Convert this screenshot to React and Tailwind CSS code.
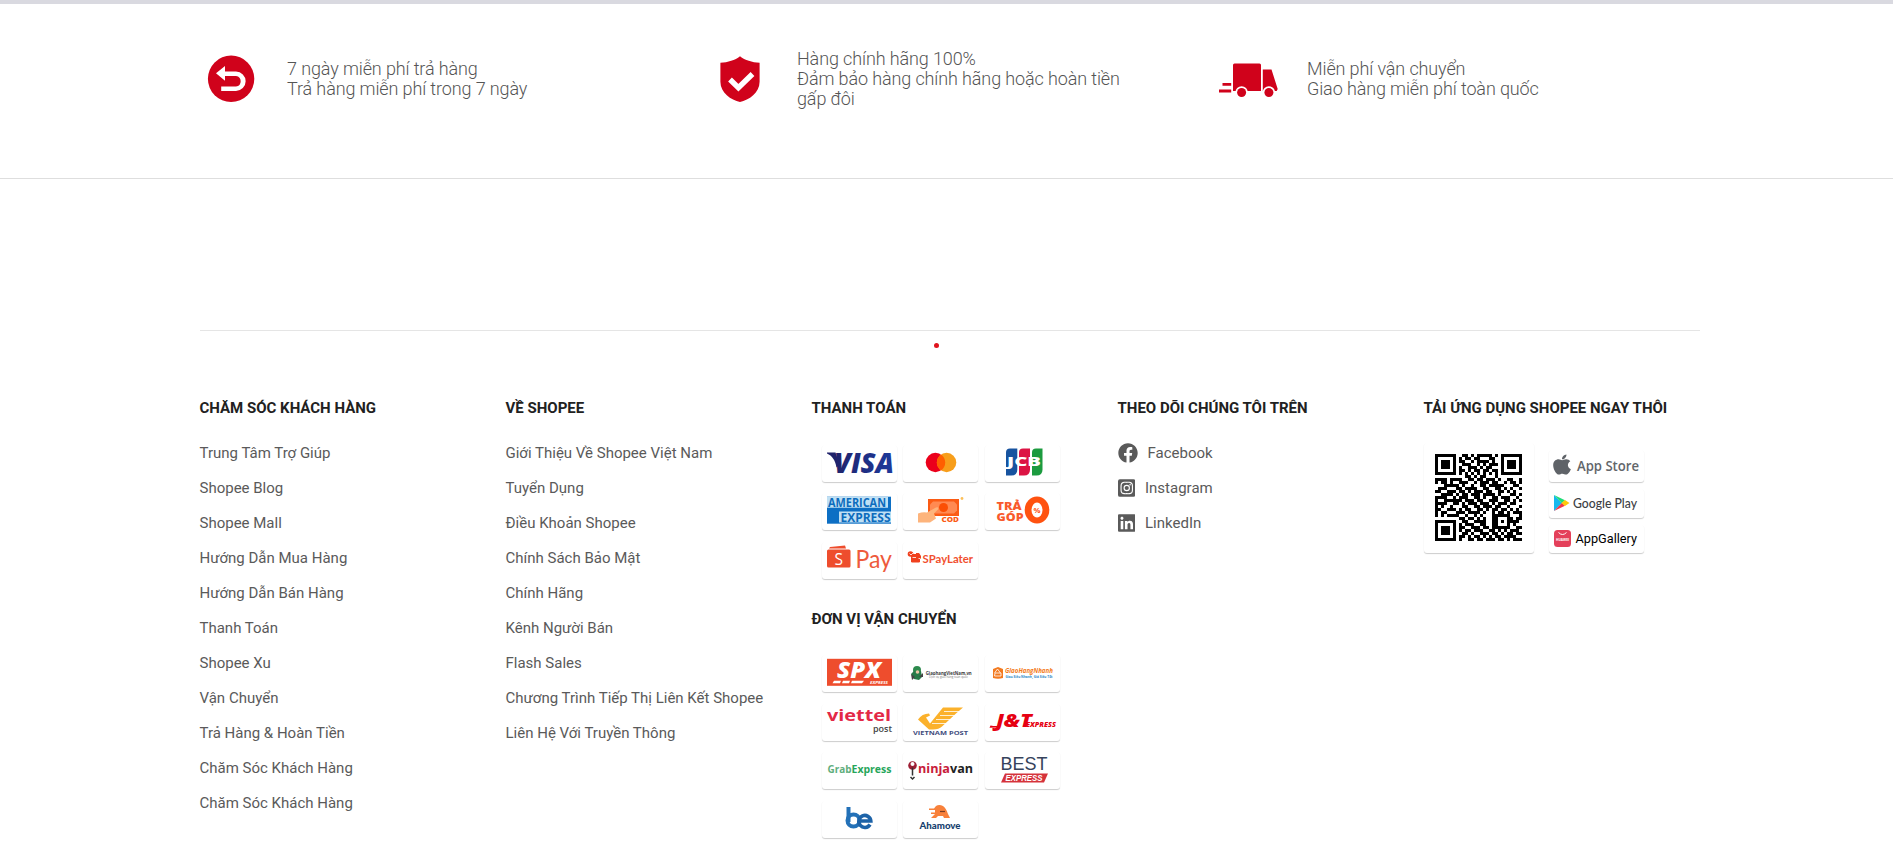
import { FaApple, FaFacebook, FaInstagramSquare, FaLinkedin } from "react-icons/fa";

const RED = "#d0021b";

const FEATURES = [
  {
    title: "7 ngày miễn phí trả hàng",
    text: "Trả hàng miễn phí trong 7 ngày",
    icon: (
      <svg className="h-14 w-[60px] shrink-0 overflow-visible" viewBox="0 0 60 56" fill="none">
        <circle cx="31.1" cy="27.8" r="23.2" fill={RED} />
        <path d="M16 22.2 25 15v5.6h11a9.6 9.6 0 0 1 0 19.3H21.2v-4.3H36a5.4 5.4 0 0 0 0-10.700H25v4.900Z" fill="#fff" />
      </svg>
    ),
  },
  {
    title: "Hàng chính hãng 100%",
    text: "Đảm bảo hàng chính hãng hoặc hoàn tiền gấp đôi",
    icon: (
      <svg className="h-14 w-[60px] shrink-0 overflow-visible" viewBox="0 0 60 56" fill="none">
        <path d="M30 5.2c5 4 12 6 19.6 6.6v19C49.6 42 39 49 30 51 21 49 10.4 42 10.4 30.8v-19C18 11.2 25 9.2 30 5.2Z" fill={RED} />
        <path d="m20 28.5 8.4 8.2L42.5 23" stroke="#fff" strokeWidth="5.4" />
      </svg>
    ),
  },
  {
    title: "Miễn phí vận chuyển",
    text: "Giao hàng miễn phí toàn quốc",
    icon: (
      <svg className="h-14 w-[60px] shrink-0 overflow-visible" viewBox="0 0 60 56" fill={RED}>
        <path d="M14.5 12.5h25q1.500 0 1.500 1.500v26H13V14q0-1.500 1.500-1.500ZM42.800 18.500h8.700l6.200 19.500-1 2H42.800Z" />
        <path d="M2.5 32h8.700v2.800H2.500ZM-1 38.500h12.200v2.900H-1Z" />
        <circle cx="21.600" cy="41.500" r="6.200" fill="#fff" />
        <circle cx="48.900" cy="41.500" r="6.200" fill="#fff" />
        <circle cx="21.600" cy="41.500" r="4.500" />
        <circle cx="48.900" cy="41.500" r="4.500" />
      </svg>
    ),
  },
];

const CARE = [
  "Trung Tâm Trợ Giúp",
  "Shopee Blog",
  "Shopee Mall",
  "Hướng Dẫn Mua Hàng",
  "Hướng Dẫn Bán Hàng",
  "Thanh Toán",
  "Shopee Xu",
  "Vận Chuyển",
  "Trả Hàng & Hoàn Tiền",
  "Chăm Sóc Khách Hàng",
  "Chăm Sóc Khách Hàng",
];

const ABOUT = [
  "Giới Thiệu Về Shopee Việt Nam",
  "Tuyển Dụng",
  "Điều Khoản Shopee",
  "Chính Sách Bảo Mật",
  "Chính Hãng",
  "Kênh Người Bán",
  "Flash Sales",
  "Chương Trình Tiếp Thị Liên Kết Shopee",
  "Liên Hệ Với Truyền Thông",
];

// One word of a logo, fitted to an exact width.
function Word({ x, y, w, size, fill, children, font = "Open Sans", weight = 700, italic = false }) {
  return (
    <text
      x={x}
      y={y}
      textLength={w}
      lengthAdjust="spacingAndGlyphs"
      fontFamily={`"${font}", sans-serif`}
      fontSize={size}
      fontWeight={weight}
      fontStyle={italic ? "italic" : "normal"}
      fill={fill}
    >
      {children}
    </text>
  );
}

const PAYMENTS = [
  <>
    <defs>
      <linearGradient id="visa"><stop stopColor="#20236b" /><stop offset="1" stopColor="#1d3a9c" /></linearGradient>
    </defs>
    <path d="M0 4.500h8.500l4 12-3 3C8.500 12.500 5 7.500 0 5.500Z" fill="#20236b" />
    <Word x={7} y={24.700} w={60} size={28.500} fill="url(#visa)" weight={800} italic>VISA</Word>
  </>,
  <>
    <circle cx="27.400" cy="14.500" r="9.700" fill="#eb001b" />
    <circle cx="38.600" cy="14.500" r="9.700" fill="#f79e1b" />
    <path d="M33 6.500a9.700 9.700 0 0 1 0 16 9.700 9.700 0 0 1 0-16Z" fill="#ff5f00" />
  </>,
  <>
    <path d="M20 .5h7.300v21q0 6-6 6H16v-23q0-4 4-4Z" fill="#17539f" />
    <path d="M33 .5h7v21q0 6-6 6h-5v-23q0-4 4-4Z" fill="#dc1444" />
    <path d="M46 .5h6.500v21q0 6-6 6H42v-23q0-4 4-4Z" fill="#1c9b3f" />
    <Word x={17} y={18.300} w={34} size={11.500} fill="#fff" weight={800}>JCB</Word>
  </>,
  <>
    <rect x="0" y=".7" width="64" height="27" fill="#0d6fc4" />
    <path d="M0 .7h61v11H0Z" fill="#bfe0f4" />
    <path d="M12 15.500h52v11H12Z" fill="#bfe0f4" />
    <Word x={1} y={10.700} w={58} size={11.500} fill="#0d6cbd" weight={700}>AMERICAN</Word>
    <Word x={13.500} y={26} w={50} size={11.500} fill="#0d6cbd" weight={700}>EXPRESS</Word>
  </>,
  <>
    <rect x="20" y="3" width="31" height="17" fill="#fb5b14" />
    <path d="M25 5.500h21l3 3v6l-3 3H25l-3-3v-6Z" fill="#ff8a52" />
    <circle cx="35.500" cy="11.500" r="4.500" fill="#fb4f05" />
    <path d="M10 17.500q5-2 9-1l9-5q3-1 2 2l-4 4 2 5-6 4H10Z" fill="#fdb47c" />
    <Word x={33.500} y={26} w={17.500} size={6.500} fill="#fb5b14" weight={800}>COD</Word>
    <circle cx="54" cy="2.500" r="1.400" fill="#fcc05a" />
  </>,
  <>
    <Word x={6.500} y={14} w={25} size={10.500} fill="#f95a2c" weight={800}>TRẢ</Word>
    <Word x={6.500} y={25} w={27} size={10.500} fill="#f95a2c" weight={800}>GÓP</Word>
    <ellipse cx="47" cy="14" rx="12.300" ry="13.500" fill="#ff5210" />
    <ellipse cx="47" cy="14" rx="5.500" ry="7.500" fill="#fff" />
    <Word x={43.500} y={16.500} w={7} size={6.500} fill="#ff5210">%</Word>
  </>,
  <>
    <path d="M3 2 18 .5l1 3H2Z" fill="#ee4d2d" />
    <rect x="0" y="4.500" width="23.500" height="18" rx="1.500" fill="#ee4d2d" />
    <Word x={7.500} y={19.500} w={8.500} size={16} fill="#fff" weight={400}>S</Word>
    <Word x={28.500} y={23} w={36.500} size={24.500} fill="#ee5a3c" font="Lato" weight={400}>Pay</Word>
  </>,
  <>
    <rect x="3" y="9" width="9" height="8.500" rx="1.200" fill="#f0401e" />
    <circle cx="2.500" cy="9" r="2.800" fill="#f0401e" />
    <path d="M8 8h3l2 3v3H8Z" fill="#f0401e" />
    <path d="M1.500 8.500 3 10l2-2M4.500 12.500H8m2.500 1h2" stroke="#fff" strokeWidth=".8" fill="none" />
    <Word x={14.500} y={17.500} w={50.500} size={11} fill="#f1502f" font="Lato" weight={700}>SPayLater</Word>
  </>,
];

const SHIPPING = [
  <>
    <rect y=".8" width="65" height="27" fill="#ee4d2d" />
    <Word x={10} y={19.500} w={44} size={22} fill="#fff" weight={800} italic>SPX</Word>
    <path d="M7 22.800h7l-1 2.500H5.500ZM16 22.800h7l-1 2.500h-7ZM25 22.800h12l-2 2.500H24Z" fill="#fff" />
    <Word x={43} y={26} w={18} size={3.600} fill="#fff" italic>EXPRESS</Word>
  </>,
  <>
    <circle cx="9" cy="12" r="4" fill="#2d8a4d" />
    <path d="M6 13h7l1 6-3 3-5-1-3-5Z" fill="#287a48" />
    <path d="m3 16 4 3-3 3Zm8 3 4-4v4Z" fill="#444" />
    <circle cx="9.500" cy="14" r="1.800" fill="#e9c6a5" />
    <Word x={17.700} y={16.500} w={46} size={5.800} fill="#3b3b3b" weight={700}>GiaohangVietNam.vn</Word>
    <Word x={21} y={20} w={39} size={3} fill="#777" weight={400}>Dịch vụ giao hàng toàn quốc</Word>
  </>,
  <>
    <path d="m3 11 5-2 5 2v9q-5 1.500-10 0Z" fill="#f37a20" />
    <path d="m4.500 15 3-4 3 4M5 15h6v3H4.500Z" stroke="#fff" strokeWidth=".8" fill="none" />
    <Word x={15} y={15.200} w={48} size={7.200} fill="#f47b20" weight={700} italic>GiaoHangNhanh</Word>
    <Word x={15.500} y={20.300} w={47} size={3.500} fill="#2a87c8">Giao Siêu Nhanh, Giá Siêu Tốt</Word>
  </>,
  <>
    <Word x={0} y={13.500} w={64} size={16.500} fill="#e32846" weight={700}>viettel</Word>
    <Word x={46} y={25} w={19} size={8} fill="#444" weight={600}>post</Word>
  </>,
  <>
    <path d="M10 12.500q4-6 11-6l1 2-4 2 4 6L35 .5h20l-7 6-14 13q-3 3-9 3h-4Z" fill="#fbb12b" />
    <path d="M36 4.500h18M32 8.500h18M28 12.500h16M24 16.500h14" stroke="#fff" strokeWidth=".8" />
    <Word x={5} y={27.500} w={55} size={5.800} fill="#3e4b7c" weight={700}>VIETNAM POST</Word>
  </>,
  <>
    <Word x={6} y={20} w={36} size={17} fill="#e60012" weight={800} italic>J&amp;T</Word>
    <path d="M.5 18.500q6 1 9 0l-2 2-8 .2Z" fill="#e60012" />
    <Word x={36} y={20} w={30} size={7.200} fill="#e60012" weight={800} italic>EXPRESS</Word>
  </>,
  <>
    <Word x={0.500} y={17.500} w={24} size={11} fill="#5fae7d" weight={700}>Grab</Word>
    <Word x={24.500} y={17.500} w={40} size={11} fill="#27a65a" weight={700}>Express</Word>
  </>,
  <>
    <circle cx="4.500" cy="10.500" r="4.300" fill="#9e1f35" />
    <circle cx="4.500" cy="9" r="2" fill="#fff" />
    <path d="M4.500 12.500v8m-2 1.500 2 2 2-2" stroke="#333" strokeWidth="1.500" fill="none" />
    <Word x={10} y={18} w={32} size={13} fill="#c8203b" weight={700}>ninja</Word>
    <Word x={42} y={18} w={23} size={13} fill="#222" weight={700}>van</Word>
  </>,
  <>
    <Word x={10.500} y={15} w={47} size={18.500} fill="#36435c" font="Liberation Sans" weight={400}>BEST</Word>
    <path d="M15 18.500h43l-4 9H11Z" fill="#d5333b" />
    <Word x={15.500} y={26.300} w={37} size={9} fill="#fff" font="Liberation Sans" italic>EXPRESS</Word>
  </>,
  <>
    <path d="M21.500 3v15" stroke="#2371b8" strokeWidth="4" />
    <circle cx="26.500" cy="16.500" r="6" fill="none" stroke="#2371b8" strokeWidth="4" />
    <path d="M43 20.500a6 6 0 1 1 .8-3.500H33.500" fill="none" stroke="#1d63a8" strokeWidth="3.600" />
  </>,
  <>
    <path d="M28 2q3-2 7 0 3 2 5 8l2 4h-6l-1-2h-5l-2 2h-5l4-4h-4V8.500h4V6h-6V4.500h5Z" fill="#f8813b" />
    <path d="M32 7.500h5" stroke="#7a3c22" strokeWidth="1.200" />
    <Word x={11.500} y={24.500} w={41} size={9.800} fill="#16416e" font="Lato" weight={900}>Ahamove</Word>
  </>,
];

const QR = [
  "11111110011010111110101111111",
  "10000010101101100011001000001",
  "10111010110010111101001011101",
  "10111010011100101011101011101",
  "10111010100111010110001011101",
  "10000010110101101101101000001",
  "11111110101010101010101111111",
  "00000000001101011000100000000",
  "11110111100110110111010011001",
  "10110100111001011101100101101",
  "00011111010010011011111000110",
  "01110001101111001100110101001",
  "11001110110101110110011010100",
  "00111101011011101111010001101",
  "11110010111001101001101110010",
  "10011111101110110011100110101",
  "11110011010111011101011101100",
  "10100100011001101110110010001",
  "11001110101100110101101101010",
  "10110001110111101001011010111",
  "10101111001001010001111110001",
  "00000000110110101001100011011",
  "11111110011001111001101011110",
  "10000010101110011001100010100",
  "10111010110011101101111110011",
  "10111010101101110011010101110",
  "10111010011010011101101011011",
  "10000010110101101010110111100",
  "11111110100110110111011010111",
];

function Heading({ children }) {
  return <h2 className="text-[15px] leading-5 font-bold whitespace-nowrap text-[#212121]">{children}</h2>;
}

function LinkColumn({ title, items }) {
  return (
    <div>
      <Heading>{title}</Heading>
      <ul className="mt-[18px]">
        {items.map((item, i) => (
          <li key={i} className="h-[35px] text-[15px] leading-[35px] whitespace-nowrap">{item}</li>
        ))}
      </ul>
    </div>
  );
}

const CARD = "rounded-[3px] bg-white shadow-[0_1px_1px_rgba(0,0,0,0.2)]";

function LogoGrid({ logos }) {
  return (
    <ul className="ml-2.5 grid w-[238px] grid-cols-[75px_75px_75px] gap-x-[6.5px] gap-y-[11.7px]">
      {logos.map((logo, i) => (
        <li key={i} className={`h-[37px] px-[5px] pt-[3.2px] ${CARD}`}>
          <svg className="block h-[27px] w-[65px] overflow-visible" viewBox="0 0 65 27">{logo}</svg>
        </li>
      ))}
    </ul>
  );
}

export default function App() {
  return (
    <div className="h-[867px] overflow-hidden bg-white font-['Roboto',sans-serif] text-[#5a5a5a]">
      <section className="h-[179px] border-t-4 border-b border-t-[#d9d9e0] border-b-[#dedede]">
        <div className="ml-[200px] grid h-[149px] w-[1500px] grid-cols-3 gap-x-[30px]">
          {FEATURES.map((f) => (
            <div key={f.title} className="flex items-center gap-[27px]">
              {f.icon}
              <p className="w-[345px] text-lg leading-5 font-light tracking-[-0.12px] text-[#555]">
                {f.title}
                <br />
                {f.text}
              </p>
            </div>
          ))}
        </div>
      </section>

      <footer className="mt-[151px] ml-[199.5px] w-[1500px] border-t border-[#e5e5e5]">
        <div className="flex h-[67px] justify-center pt-3">
          <span className="mr-[26px] size-[5px] rounded-full bg-[#e0141e]" />
        </div>
        <div className="grid grid-cols-5 gap-x-[30px]">
          <LinkColumn title="CHĂM SÓC KHÁCH HÀNG" items={CARE} />
          <LinkColumn title="VỀ SHOPEE" items={ABOUT} />

          <div>
            <Heading>THANH TOÁN</Heading>
            <div className="mt-[26.5px]">
              <LogoGrid logos={PAYMENTS} />
            </div>
            <div className="mt-[30px]">
              <Heading>ĐƠN VỊ VẬN CHUYỂN</Heading>
            </div>
            <div className="mt-[26px]">
              <LogoGrid logos={SHIPPING} />
            </div>
          </div>

          <div>
            <Heading>THEO DÕI CHÚNG TÔI TRÊN</Heading>
            <ul className="mt-[18px] text-[15px]">
              <li className="flex h-[35px] items-center gap-2.5"><FaFacebook className="-mt-0.5 h-5 w-5" />Facebook</li>
              <li className="flex h-[35px] items-center gap-2.5"><FaInstagramSquare className="-mt-0.5 h-5 w-[17.5px]" />Instagram</li>
              <li className="flex h-[35px] items-center gap-2.5"><FaLinkedin className="-mt-0.5 h-5 w-[17.5px]" />LinkedIn</li>
            </ul>
          </div>

          <div>
            <Heading>TẢI ỨNG DỤNG SHOPEE NGAY THÔI</Heading>
            <div className="mt-[25px] flex gap-[15px]">
              <div className={`size-[110px] px-[11.5px] pt-[11px] ${CARD}`}>
                <svg className="size-[87px]" viewBox="0 0 29 29" shapeRendering="crispEdges">
                  {QR.map((row, y) =>
                    [...row].map((cell, x) => cell === "1" && <rect key={`${x}-${y}`} x={x} y={y} width="1" height="1" />),
                  )}
                </svg>
              </div>
              <div className="flex flex-col justify-end gap-[7px]">
                <div className={`flex h-8 w-[95px] items-center gap-1 pl-1 ${CARD}`}>
                  <FaApple className="-mt-[3px] h-[23px] w-[18px] shrink-0 text-[#5f6368]" preserveAspectRatio="none" />
                  <svg className="h-8 w-[66px] overflow-visible" viewBox="0 0 66 32">
                    <Word x={2} y={20.5} w={62} size={15} fill="#62666a" weight={600}>App Store</Word>
                  </svg>
                </div>
                <div className={`h-[29px] w-[95px] ${CARD}`}>
                  <svg className="block h-[29px] w-[95px]" viewBox="0 0 95 29">
                    <path d="M5 6v16l8-8Z" fill="#16b9ee" />
                    <path d="M5 6l11 5.300-3 3Z" fill="#1fdc77" />
                    <path d="M5 22l11-5.300-3-3Z" fill="#f0364a" />
                    <path d="m12.500 14 3.500-3 4.500 3-4.500 3Z" fill="#fdc80a" />
                    <Word x={24} y={19} w={64} size={12.800} fill="#3c4043" font="Lato" weight={500}>Google Play</Word>
                  </svg>
                </div>
                <div className={`h-7 w-[95px] ${CARD}`}>
                  <svg className="block h-7 w-[95px]" viewBox="0 0 95 28">
                    <rect x="5" y="5" width="17" height="17" rx="3.500" fill="#e4405a" />
                    <path d="M9.500 7.500q4 4 8 0" stroke="#fff" fill="none" />
                    <Word x={7} y={16} w={13} size={3.500} fill="#fff">HUAWEI</Word>
                    <Word x={26.500} y={18} w={61.500} size={13} fill="#000" font="Roboto" weight={400}>AppGallery</Word>
                  </svg>
                </div>
              </div>
            </div>
          </div>
        </div>
      </footer>
    </div>
  );
}
